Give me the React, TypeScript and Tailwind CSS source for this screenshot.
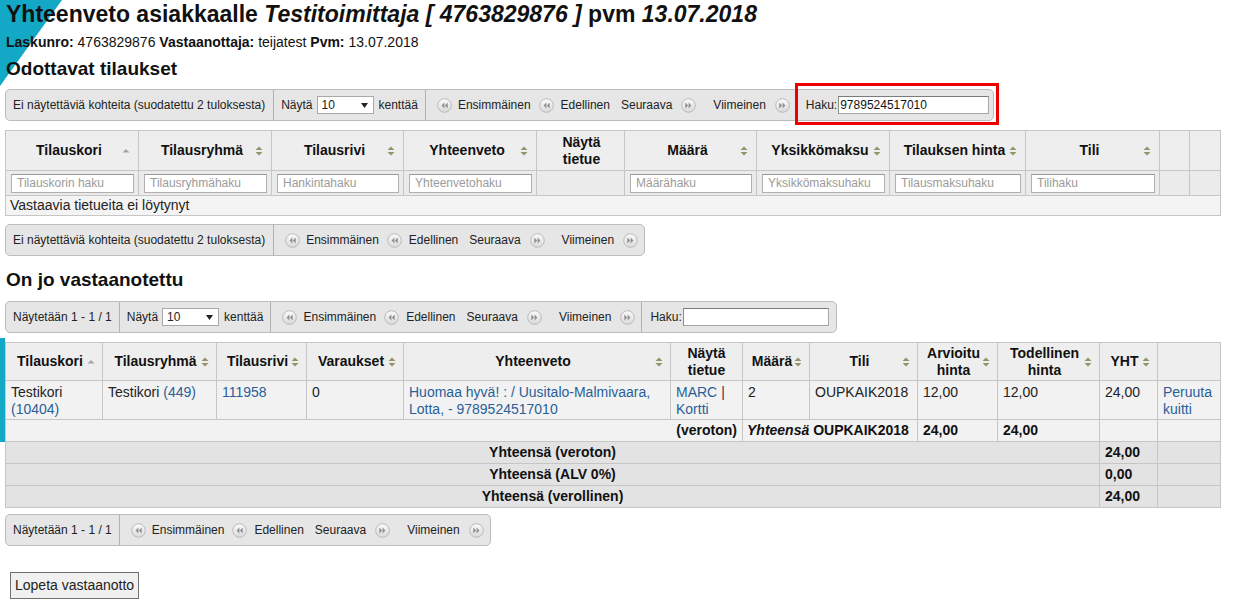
import React from 'react';

const SortIcon = ({ asc = false }: { asc?: boolean }) =>
  asc ? (
    <svg width="8" height="10" viewBox="0 0 8 10" className="shrink-0">
      <path d="M0.5 6.5 L4 3 L7.5 6.5 Z" fill="#a3a3a3" />
    </svg>
  ) : (
    <svg width="8" height="10" viewBox="0 0 8 10" className="shrink-0">
      <path d="M0.5 4 L4 0.5 L7.5 4 Z M0.5 6 L7.5 6 L4 9.5 Z" fill="#939366" />
    </svg>
  );

const PageIcon = ({ next = false }: { next?: boolean }) => (
  <svg width="15" height="15" viewBox="0 0 15 15" className="shrink-0">
    <defs>
      <linearGradient id="pg" x1="0" y1="0" x2="0" y2="1">
        <stop offset="0" stopColor="#fbfbfb" />
        <stop offset="1" stopColor="#d9d9d9" />
      </linearGradient>
    </defs>
    <circle cx="7.5" cy="7.5" r="6.8" fill="url(#pg)" stroke="#b9b9b9" />
    {next ? (
      <path d="M4.3 4.6 L7.1 7.5 L4.3 10.4 Z M7.6 4.6 L10.4 7.5 L7.6 10.4 Z" fill="#8f8f8f" />
    ) : (
      <path d="M10.7 4.6 L7.9 7.5 L10.7 10.4 Z M7.4 4.6 L4.6 7.5 L7.4 10.4 Z" fill="#8f8f8f" />
    )}
  </svg>
);

const Select = () => (
  <span className="inline-flex h-[18px] w-[57px] items-center justify-between border border-[#a9a9a9] bg-white pl-[4px] pr-[5px] text-[12px]">
    <span>10</span>
    <svg width="7" height="5" viewBox="0 0 7 5">
      <path d="M0 0 L7 0 L3.5 5 Z" fill="#222" />
    </svg>
  </span>
);

const Toolbar = ({ children }: { children: React.ReactNode }) => (
  <div className="inline-flex h-[32px] items-stretch rounded-[5px] border border-[#bcbcbc] bg-[#e6e6e6] text-[12px] text-[#222]">
    {children}
  </div>
);

const Pager = () => (
  <div className="flex items-center border-l border-[#b3b3b3] pl-[11px] pr-[6px]">
    <PageIcon />
    <span className="ml-[6px]">Ensimmäinen</span>
    <span className="ml-[8px] flex"><PageIcon /></span>
    <span className="ml-[7px]">Edellinen</span>
    <span className="ml-[11px]">Seuraava</span>
    <span className="ml-[9px] flex"><PageIcon next /></span>
    <span className="ml-[17px]">Viimeinen</span>
    <span className="ml-[9px] flex"><PageIcon next /></span>
  </div>
);

const ShowCount = () => (
  <div className="flex items-center border-l border-[#b3b3b3] pl-[7px] pr-[7px]">
    <span>Näytä</span>
    <span className="ml-[4px] flex"><Select /></span>
    <span className="ml-[5px]">kenttää</span>
  </div>
);

const Search = ({ value, wide }: { value?: string; wide?: boolean }) => (
  <input
    defaultValue={value}
    className={`h-[18px] border border-[#a6a6a6] border-t-[#7b7b7b] border-l-[#8c8c8c] bg-white px-[1px] text-[12px] text-[#111] outline-none ${wide ? 'w-[151px]' : 'w-[146px]'}`}
  />
);

const link = 'text-[#2a5f98]';

const Th1 = ({ label, icon = 'sort' }: { label: React.ReactNode; icon?: 'sort' | 'asc' | 'none' }) => (
  <th className="h-[40px] border border-[#c6c6c6] bg-[#eeeeee] pl-[10px] pr-[8px] text-[14px] font-bold leading-[17px]">
    <div className="flex items-center">
      <span className="flex-1 text-center">{label}</span>
      {icon === 'sort' && <SortIcon />}
      {icon === 'asc' && <SortIcon asc />}
    </div>
  </th>
);

const Th2 = ({ label, icon = 'sort' }: { label: React.ReactNode; icon?: 'sort' | 'asc' | 'none' }) => (
  <th className="h-[38px] border border-[#c6c6c6] bg-[#eeeeee] px-[7px] text-[14px] font-bold leading-[17px]">
    <div className="flex items-center">
      <span className="flex-1 text-center">{label}</span>
      {icon === 'sort' && <SortIcon />}
      {icon === 'asc' && <SortIcon asc />}
    </div>
  </th>
);

const FilterCell = ({ ph }: { ph?: string }) => (
  <td className="h-[25px] border border-[#c6c6c6] bg-[#ebebeb] pl-[5px] pr-[4px]">
    {ph && (
      <input
        placeholder={ph}
        className="block h-[19px] w-full border border-[#b0b0b0] border-t-[#9a9a9a] bg-white px-[5px] text-[12px] outline-none placeholder:text-[#9b9b9b]"
      />
    )}
  </td>
);

const td2 = 'border border-[#c6c6c6] bg-[#f2f2f2] pl-[5px] pr-[3px] pt-[3px] pb-[1px] align-top text-[14px] leading-[17px] text-[#222]';
const sub = 'h-[22px] border border-[#c6c6c6] bg-[#f2f2f2] px-[5px] text-[14px] font-bold text-[#111]';
const tot = 'h-[22px] border border-[#c6c6c6] bg-[#e3e3e3] px-[5px] text-[14px] font-bold text-[#111]';

export default function App() {
  const w1 = [133, 133, 132, 133, 88, 132, 133, 136, 134, 30, 31];
  const w2 = [97, 114, 90, 97, 267, 72, 67, 108, 80, 102, 58, 63];

  return (
    <div className="relative min-h-screen bg-white font-['Liberation_Sans',Arial,sans-serif] text-[#111]">
      <svg className="absolute left-0 top-0" width="64" height="88">
        <polygon points="0,0 62,0 0,86" fill="#13a8c6" />
      </svg>
      <div className="absolute left-0 top-[338px] h-[104px] w-[5px] bg-[#13a8c6]" />

      <div className="relative pl-[5px]">
        <h1 className="pl-[1px] text-[23px] font-bold leading-[28px]">
          Yhteenveto asiakkaalle <i>Testitoimittaja [ 4763829876 ]</i> pvm <i>13.07.2018</i>
        </h1>
        <p className="mt-[5px] pl-[1px] text-[14px] leading-[18px]">
          <b>Laskunro:</b> 4763829876 <b>Vastaanottaja:</b> teijatest <b>Pvm:</b> 13.07.2018
        </p>
        <h2 className="mt-[6px] pl-[1px] text-[19px] font-bold leading-[24px]">Odottavat tilaukset</h2>

        <div className="mt-[8px] flex">
          <Toolbar>
            <div className="flex items-center pl-[7px] pr-[8px]">Ei näytettäviä kohteita (suodatettu 2 tuloksesta)</div>
            <ShowCount />
            <Pager />
            <div className="relative flex items-center border-l border-[#b3b3b3] pl-[9px] pr-[4px]">
              <span>Haku:</span>
              <span className="ml-[1px] flex"><Search value="9789524517010" wide /></span>
              <div className="pointer-events-none absolute -bottom-[5px] -left-[2px] -right-[6px] -top-[7px] border-[3px] border-[#ee0000]" />
            </div>
          </Toolbar>
        </div>

        <table className="mt-[9px] w-[1215px] table-fixed border-collapse">
          <colgroup>
            {w1.map((w, i) => (
              <col key={i} style={{ width: w }} />
            ))}
          </colgroup>
          <thead>
            <tr>
              <Th1 label="Tilauskori" icon="asc" />
              <Th1 label="Tilausryhmä" />
              <Th1 label="Tilausrivi" />
              <Th1 label="Yhteenveto" />
              <Th1 label={<>Näytä<br />tietue</>} icon="none" />
              <Th1 label="Määrä" />
              <Th1 label="Yksikkömaksu" />
              <Th1 label="Tilauksen hinta" />
              <Th1 label="Tili" />
              <Th1 label="" icon="none" />
              <Th1 label="" icon="none" />
            </tr>
            <tr>
              <FilterCell ph="Tilauskorin haku" />
              <FilterCell ph="Tilausryhmähaku" />
              <FilterCell ph="Hankintahaku" />
              <FilterCell ph="Yhteenvetohaku" />
              <FilterCell />
              <FilterCell ph="Määrähaku" />
              <FilterCell ph="Yksikkömaksuhaku" />
              <FilterCell ph="Tilausmaksuhaku" />
              <FilterCell ph="Tilihaku" />
              <FilterCell />
              <FilterCell />
            </tr>
          </thead>
          <tbody>
            <tr>
              <td colSpan={11} className="h-[20px] border border-[#c6c6c6] bg-[#f4f4f4] pl-[4px] text-[14px] leading-[17px] text-[#222]">
                Vastaavia tietueita ei löytynyt
              </td>
            </tr>
          </tbody>
        </table>

        <div className="mt-[8px] flex">
          <Toolbar>
            <div className="flex items-center pl-[7px] pr-[8px]">Ei näytettäviä kohteita (suodatettu 2 tuloksesta)</div>
            <Pager />
          </Toolbar>
        </div>

        <h2 className="mt-[12px] pl-[1px] text-[19px] font-bold leading-[24px]">On jo vastaanotettu</h2>

        <div className="mt-[9px] flex">
          <Toolbar>
            <div className="flex items-center pl-[7px] pr-[7px]">Näytetään 1 - 1 / 1</div>
            <ShowCount />
            <Pager />
            <div className="flex items-center border-l border-[#b3b3b3] pl-[8px] pr-[7px]">
              <span>Haku:</span>
              <span className="ml-[1px] flex"><Search /></span>
            </div>
          </Toolbar>
        </div>

        <table className="mt-[9px] w-[1215px] table-fixed border-collapse">
          <colgroup>
            {w2.map((w, i) => (
              <col key={i} style={{ width: w }} />
            ))}
          </colgroup>
          <thead>
            <tr>
              <Th2 label="Tilauskori" icon="asc" />
              <Th2 label="Tilausryhmä" />
              <Th2 label="Tilausrivi" />
              <Th2 label="Varaukset" />
              <Th2 label="Yhteenveto" />
              <Th2 label={<>Näytä<br />tietue</>} icon="none" />
              <Th2 label="Määrä" />
              <Th2 label="Tili" />
              <Th2 label={<>Arvioitu<br />hinta</>} />
              <Th2 label={<>Todellinen<br />hinta</>} />
              <Th2 label="YHT" />
              <Th2 label="" icon="none" />
            </tr>
          </thead>
          <tbody>
            <tr>
              <td className={td2}>
                Testikori <a className={link}>(10404)</a>
              </td>
              <td className={td2}>
                Testikori <a className={link}>(449)</a>
              </td>
              <td className={td2}>
                <a className={link}>111958</a>
              </td>
              <td className={td2}>0</td>
              <td className={td2}>
                <a className={link}>Huomaa hyvä! : / Uusitalo-Malmivaara, Lotta, - 9789524517010</a>
              </td>
              <td className={td2}>
                <a className={link}>MARC</a> <span className="text-[#5c2446]">|</span> <a className={link}>Kortti</a>
              </td>
              <td className={td2}>2</td>
              <td className={td2}>OUPKAIK2018</td>
              <td className={td2}>12,00</td>
              <td className={td2}>12,00</td>
              <td className={td2}>24,00</td>
              <td className={td2}>
                <a className={link}>Peruuta kuitti</a>
              </td>
            </tr>
            <tr>
              <td colSpan={6} className={`${sub} text-right`}>(veroton)</td>
              <td colSpan={2} className={`${sub} pl-[4px]`}>
                <i>Yhteensä</i> OUPKAIK2018
              </td>
              <td className={sub}>24,00</td>
              <td className={sub}>24,00</td>
              <td className={sub} />
              <td className={sub} />
            </tr>
            {[
              ['Yhteensä (veroton)', '24,00'],
              ['Yhteensä (ALV 0%)', '0,00'],
              ['Yhteensä (verollinen)', '24,00'],
            ].map(([label, value]) => (
              <tr key={label}>
                <td colSpan={10} className={`${tot} text-center`}>{label}</td>
                <td className={tot}>{value}</td>
                <td className={tot} />
              </tr>
            ))}
          </tbody>
        </table>

        <div className="mt-[6px] flex">
          <Toolbar>
            <div className="flex items-center pl-[7px] pr-[7px]">Näytetään 1 - 1 / 1</div>
            <Pager />
          </Toolbar>
        </div>

        <button className="ml-[5px] mt-[26px] h-[27px] border border-[#707070] bg-[#f0f0f0] px-[4px] text-[14px] text-[#222]">
          Lopeta vastaanotto
        </button>
      </div>
    </div>
  );
}
